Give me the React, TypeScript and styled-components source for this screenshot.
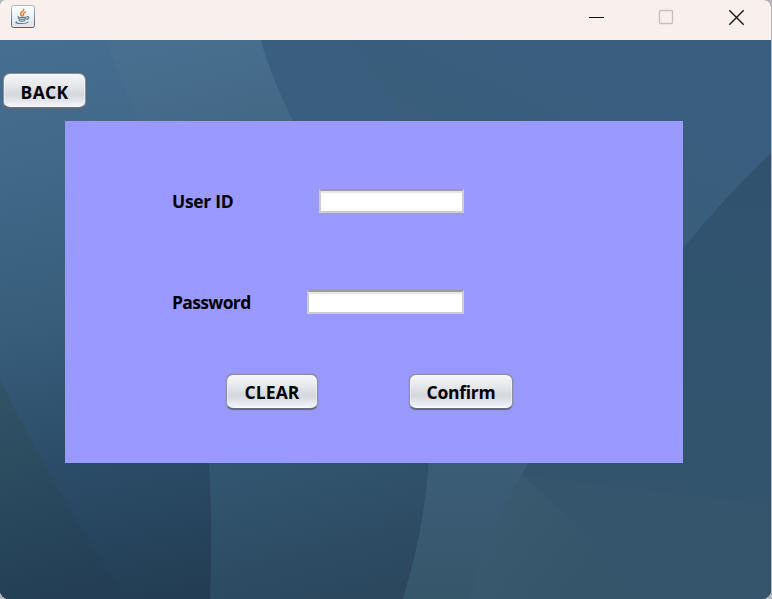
import React from "react";
import styled, { createGlobalStyle } from "styled-components";

const GlobalStyle = createGlobalStyle`
  * { box-sizing: border-box; }
  html, body, #root { margin: 0; height: 100%; }
  body { background: #b9b5b6; overflow: hidden; }
`;

const Frame = styled.main`
  position: relative;
  isolation: isolate;
  display: flex;
  flex-direction: column;
  width: 771px;
  height: 599px;
  overflow: hidden;
  border-radius: 5px 7px 9px 9px;
  background: #34536b;
  font-family: "Open Sans", "Noto Sans", sans-serif;
  color: #000;
`;

const TitleBar = styled.header`
  display: flex;
  flex: none;
  align-items: flex-start;
  justify-content: space-between;
  height: 40px;
  padding: 5px 26px 0 11px;
  background: #f9f0ee;
`;

const WindowControls = styled.div`
  display: flex;
  gap: 53px;
  padding-top: 4px;
`;

const ControlButton = styled.button`
  display: flex;
  width: 17px;
  height: 17px;
  padding: 0;
  border: 0;
  background: none;
`;

const Wallpaper = styled.svg`
  position: absolute;
  z-index: -1;
  left: 0;
  top: 0;
`;

const Content = styled.div`
  display: flex;
  flex-direction: column;
  align-items: flex-start;
  padding: 33px 0 0 3px;
`;

const Panel = styled.form`
  display: flex;
  flex-direction: column;
  width: 618px;
  height: 342px;
  margin: 12px 0 0 62px;
  padding: 68px 0 0 107px;
  background: #9999ff;
`;

const FieldRow = styled.div<{ $after: number }>`
  display: flex;
  align-items: center;
  justify-content: space-between;
  width: 292px;
  height: 24px;
  margin-bottom: ${(p) => p.$after}px;
`;

const Label = styled.label<{ $tracking: number }>`
  font-size: 17.5px;
  line-height: 24px;
  font-weight: 700;
  letter-spacing: ${(p) => p.$tracking}px;
`;

const Field = styled.input<{ $width: number }>`
  width: ${(p) => p.$width}px;
  height: 24px;
  padding: 0 6px;
  border: 2px solid #cdcdd2;
  border-top-color: #9b9ba1;
  border-radius: 0;
  outline: 0;
  background: #fff;
  box-shadow: inset 0 2px 1px #e6e6e8;
  font: 600 14px "Open Sans", sans-serif;
`;

const Actions = styled.div`
  display: flex;
  gap: 91px;
  padding-left: 54px;
`;

const Button = styled.button<{ $width: number; $tracking: number; $drop?: number }>`
  width: ${(p) => p.$width}px;
  height: 36px;
  padding: ${(p) => 1 + (p.$drop ?? 0)}px 0 0;
  border: 1px solid #8c9099;
  border-bottom: 2px solid #666b76;
  border-radius: 7px;
  background: linear-gradient(#f5f6f8 0%, #e5e7eb 35%, #d4d7dd 62%, #dfe2e9 78%, #f5f8fd 100%);
  box-shadow: inset 0 0 0 1px rgba(255, 255, 255, 0.4), 0 0 1px rgba(70, 70, 85, 0.6);
  color: #000;
  font: 700 17.5px/30px "Open Sans", "Noto Sans", sans-serif;
  letter-spacing: ${(p) => p.$tracking}px;
  white-space: nowrap;
`;

const JavaIcon = () => (
  <svg width="24" height="24" viewBox="0 0 24 24" aria-label="Java">
    <defs>
      <linearGradient id="tile" x2="0" y2="1">
        <stop stopColor="#fff" />
        <stop offset="1" stopColor="#dfe2e6" />
      </linearGradient>
      <linearGradient id="rim" x2="0" y2="1">
        <stop stopColor="#a9bac9" />
        <stop offset="1" stopColor="#48647e" />
      </linearGradient>
    </defs>
    <rect x="0.5" y="0.5" width="23" height="22" rx="2" fill="url(#tile)" stroke="url(#rim)" />
    <g fill="none" strokeLinecap="round">
      <path d="M12.8 4.2c.8 2.1-4 2.8-3.2 5 .2.8 1 1.1 1.4 2M14.4 7c-3 1-1.4 2.1-2.2 3.7" stroke="#e87922" strokeWidth="1.5" />
      <path d="M7.4 11.6c-3 1 8.2 1.3 8.8.1M7.4 13.5c1 1 6 1 7.4 0M8.2 15.4c1 1 4.6 1 5.7 0M16.4 11.6c2.5-.4 1.5 2.5-.7 2.8" stroke="#557f9f" strokeWidth="1.1" />
      <path d="M5.8 16.7c-4.5 2 9.6 2.5 11.2.3" stroke="#557f9f" strokeWidth="1.1" />
    </g>
  </svg>
);

const Background = () => (
  <Wallpaper width="771" height="599" viewBox="0 0 771 599" aria-hidden="true">
    <defs>
      <linearGradient id="left" gradientUnits="userSpaceOnUse" x1="30" y1="40" x2="145" y2="599">
        <stop stopColor="#466e90" />
        <stop offset="0.2" stopColor="#42698a" />
        <stop offset="0.5" stopColor="#375d7a" />
        <stop offset="0.75" stopColor="#2b4c68" />
        <stop offset="1" stopColor="#233e54" />
      </linearGradient>
      <linearGradient id="middle" gradientUnits="userSpaceOnUse" x1="180" y1="40" x2="330" y2="599">
        <stop stopColor="#496f90" />
        <stop offset="0.16" stopColor="#446987" />
        <stop offset="0.75" stopColor="#32556f" />
        <stop offset="1" stopColor="#2b485f" />
      </linearGradient>
      <linearGradient id="corner" gradientUnits="userSpaceOnUse" x1="0" y1="380" x2="60" y2="599">
        <stop stopColor="#325467" />
        <stop offset="0.55" stopColor="#29485d" />
        <stop offset="1" stopColor="#233e55" />
      </linearGradient>
      <linearGradient id="lower" gradientUnits="userSpaceOnUse" x1="0" y1="463" x2="0" y2="599">
        <stop stopColor="#3b5d77" />
        <stop offset="1" stopColor="#36566a" />
      </linearGradient>
      <linearGradient id="right" gradientUnits="userSpaceOnUse" x1="0" y1="150" x2="0" y2="599">
        <stop stopColor="#30526f" />
        <stop offset="0.5" stopColor="#32546f" />
        <stop offset="1" stopColor="#35546c" />
      </linearGradient>
      <linearGradient id="wedge" gradientUnits="userSpaceOnUse" x1="520" y1="500" x2="600" y2="560">
        <stop stopColor="#39596f" />
        <stop offset="1" stopColor="#35556b" />
      </linearGradient>
      <linearGradient id="sheen" gradientUnits="userSpaceOnUse" x1="480" y1="190" x2="540" y2="60">
        <stop stopColor="#3a5e79" />
        <stop offset="0.5" stopColor="#3a5e79" stopOpacity="0.6" />
        <stop offset="1" stopColor="#3a5e79" stopOpacity="0" />
      </linearGradient>
    </defs>
    <path d="M0 40H771V599H0Z" fill="#395e7f" />
    <path d="M350 40H771V250H683V121H400Z" fill="url(#sheen)" opacity="0.7" />
    <path d="M0 40H261Q270 75 293 121L429 463Q424 532 403 599H0Z" fill="url(#middle)" />
    <path d="M0 40H105Q120 75 137 121Q199 275 209 463Q213 530 210 599H0Z" fill="url(#left)" />
    <path d="M0 378Q52 488 127 599H0Z" fill="url(#corner)" />
    <path d="M771 153Q725 197 683 248L500 463L460 599H771Z" fill="url(#right)" />
    <path d="M683 269L771 280V599H683Z" fill="#34556c" opacity="0.35" />
    <path d="M429 463H528Q488 535 470 599H403Q424 532 429 463Z" fill="url(#lower)" />
    <path d="M522 474L604 548L650 599H470Q486 535 522 474Z" fill="url(#wedge)" />
    <path d="M522 474Q640 490 771 504V599H650L604 548Z" fill="#36556c" opacity="0.5" />
  </Wallpaper>
);

export default function App() {
  return (
    <>
      <GlobalStyle />
      <Frame>
        <Background />
        <TitleBar>
          <JavaIcon />
          <WindowControls>
            <ControlButton aria-label="Minimize">
              <svg width="17" height="17"><path d="M1 8.5h15" stroke="#111" /></svg>
            </ControlButton>
            <ControlButton aria-label="Maximize" disabled>
              <svg width="17" height="17"><rect x="1.5" y="1.5" width="13" height="13" rx="1" fill="none" stroke="#c6bfbd" strokeWidth="1.3" /></svg>
            </ControlButton>
            <ControlButton aria-label="Close">
              <svg width="17" height="17"><path d="m1.3 1.3 14.4 14.4m0-14.4L1.3 15.7" stroke="#161616" strokeWidth="1.35" /></svg>
            </ControlButton>
          </WindowControls>
        </TitleBar>
        <Content>
          <Button $width={83} $tracking={0.3} $drop={2}>BACK</Button>
          <Panel onSubmit={(e) => e.preventDefault()}>
            <FieldRow $after={77}>
              <Label htmlFor="user" $tracking={-0.3}>User ID</Label>
              <Field id="user" $width={145} />
            </FieldRow>
            <FieldRow $after={60}>
              <Label htmlFor="password" $tracking={-0.65}>Password</Label>
              <Field id="password" type="password" $width={157} />
            </FieldRow>
            <Actions>
              <Button type="reset" $width={92} $tracking={0.1}>CLEAR</Button>
              <Button $width={104} $tracking={-0.25}>Confirm</Button>
            </Actions>
          </Panel>
        </Content>
      </Frame>
    </>
  );
}
